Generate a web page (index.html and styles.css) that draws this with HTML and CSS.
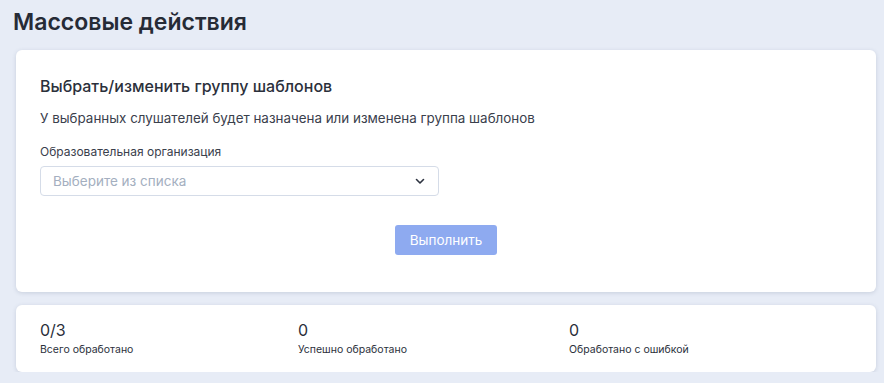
FILE: index.html
```html
<!DOCTYPE html>
<html lang="ru">
<head>
    <meta charset="UTF-8">
    <title>Массовые действия</title>
    <link rel="stylesheet" href="styles.css">
</head>
<body>
    <h1 class="page-title">Массовые действия</h1>

    <div class="card">
        <h3 class="card-title">Выбрать/изменить группу шаблонов</h3>
        <p class="card-desc">У выбранных слушателей будет назначена или изменена группа шаблонов</p>

        <label class="field">
            <span class="field-label">Образовательная организация</span>
            <span class="select">
                <span class="select-placeholder">Выберите из списка</span>
                <svg class="select-arrow" width="12" height="12" viewBox="0 0 12 12">
                    <path d="M2.5 4.5 L6 8 L9.5 4.5" fill="none" stroke="#2d3340" stroke-width="1.6" stroke-linecap="round" stroke-linejoin="round"/>
                </svg>
            </span>
        </label>

        <div class="actions">
            <button class="btn" type="button" disabled>Выполнить</button>
        </div>
    </div>

    <div class="card stats">
        <div class="stat">
            <div class="stat-value">0/3</div>
            <div class="stat-label">Всего обработано</div>
        </div>
        <div class="stat">
            <div class="stat-value">0</div>
            <div class="stat-label">Успешно обработано</div>
        </div>
        <div class="stat">
            <div class="stat-value">0</div>
            <div class="stat-label">Обработано с ошибкой</div>
        </div>
    </div>
</body>
</html>
```

FILE: styles.css
```css
* {
    box-sizing: border-box;
}

body {
    font-family: Inter, "Noto Sans", sans-serif;
    background-color: #e7ecf6;
    margin: 0;
    padding: 7px 8px 0 16px;
    color: #2b303b;
}

.page-title {
    margin: 0 0 13px -3px;
    font-size: 23px;
    line-height: 30px;
    font-weight: 600;
    color: #262b36;
}

.card {
    background: #fff;
    border-radius: 6px;
    box-shadow: 0 1px 4px rgba(60, 75, 110, 0.18);
    padding: 24px 24px 37px;
}

.card-title {
    margin: 0;
    font-size: 16px;
    line-height: 22px;
    font-weight: 500;
    padding-top: 1px;
}

.card-desc {
    margin: 11px 0 0;
    font-size: 13.4px;
    line-height: 20px;
    color: #3a404c;
}

.field {
    display: flex;
    flex-direction: column;
    margin-top: 16px;
    width: 399px;
}

.field-label {
    font-size: 12px;
    line-height: 16px;
    color: #3a404c;
    margin-bottom: 6px;
}

.select {
    display: flex;
    align-items: center;
    justify-content: space-between;
    height: 30px;
    padding: 0 12px 0 12px;
    border: 1px solid #d5dce8;
    border-radius: 4px;
}

.select-placeholder {
    font-size: 13.5px;
    color: #a4afc0;
}

.actions {
    display: flex;
    justify-content: center;
    margin-top: 29px;
}

.btn {
    background-color: #8eaaf0;
    color: #fff;
    border: none;
    border-radius: 3px;
    font-family: inherit;
    font-size: 13.5px;
    height: 30px;
    padding: 0 15px;
}

.stats {
    display: grid;
    grid-template-columns: 258px 271px 1fr;
    margin-top: 13px;
    padding: 15px 24px 15px;
}

.stat-value {
    font-size: 16px;
    line-height: 20px;
}

.stat-label {
    font-size: 10.5px;
    line-height: 14px;
    margin-top: 3px;
}
```
